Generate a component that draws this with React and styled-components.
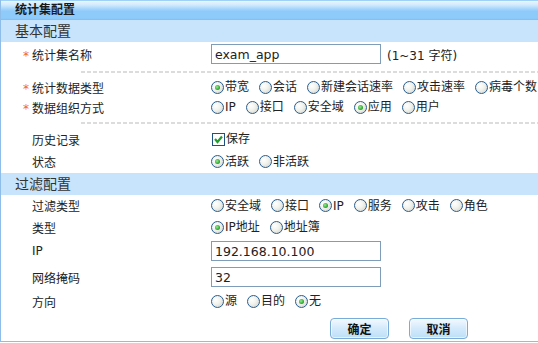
import React from "react";
import styled, { createGlobalStyle } from "styled-components";

const GlobalStyle = createGlobalStyle`
  html, body {
    margin: 0;
    padding: 0;
    background: #fff;
    overflow: hidden;
  }
  body {
    font-family: "DejaVu Sans", "Noto Sans CJK SC", sans-serif;
    font-size: 12px;
    color: #222;
  }
`;

const dataTypes = ["带宽", "会话", "新建会话速率", "攻击速率", "病毒个数"];
const orgModes = ["IP", "接口", "安全域", "应用", "用户"];
const filterTypes = ["安全域", "接口", "IP", "服务", "攻击", "角色"];

export default function App() {
  return (
    <>
      <GlobalStyle />
      <Panel>
        <TitleBar>统计集配置</TitleBar>

        <SectionHead>基本配置</SectionHead>
        <Row $h={24}>
          <Label>
            <Req>*</Req>统计集名称
          </Label>
          <TextInput defaultValue="exam_app" />
          <Hint>(1~31 字符)</Hint>
        </Row>
        <Separator />
        <Row $h={20}>
          <Label>
            <Req>*</Req>统计数据类型
          </Label>
          <RadioGroup items={dataTypes} checked="带宽" />
        </Row>
        <Row $h={20}>
          <Label>
            <Req>*</Req>数据组织方式
          </Label>
          <RadioGroup items={orgModes} checked="应用" />
        </Row>
        <Separator />
        <Row $h={22}>
          <Label>历史记录</Label>
          <Option>
            <CheckBox>
              <svg width="11" height="11" viewBox="0 0 11 11">
                <polyline
                  points="2,5 4.5,8 9,2.5"
                  fill="none"
                  stroke="#1f9e2a"
                  strokeWidth="2.2"
                />
              </svg>
            </CheckBox>
            保存
          </Option>
        </Row>
        <Row $h={23}>
          <Label>状态</Label>
          <RadioGroup items={["活跃", "非活跃"]} checked="活跃" />
        </Row>

        <SectionHead>过滤配置</SectionHead>
        <Row $h={21}>
          <Label>过滤类型</Label>
          <RadioGroup items={filterTypes} checked="IP" />
        </Row>
        <Row $h={22}>
          <Label>类型</Label>
          <RadioGroup items={["IP地址", "地址簿"]} checked="IP地址" />
        </Row>
        <Row $h={26}>
          <Label>IP</Label>
          <TextInput defaultValue="192.168.10.100" />
        </Row>
        <Row $h={26}>
          <Label>网络掩码</Label>
          <TextInput defaultValue="32" />
        </Row>
        <Row $h={22}>
          <Label>方向</Label>
          <RadioGroup items={["源", "目的", "无"]} checked="无" />
        </Row>

        <Buttons>
          <Button>确定</Button>
          <Button>取消</Button>
        </Buttons>
      </Panel>
    </>
  );
}

function RadioGroup({ items, checked }) {
  return (
    <Options>
      {items.map((item) => (
        <Option key={item}>
          <Radio $on={item === checked} />
          {item}
        </Option>
      ))}
    </Options>
  );
}

const Panel = styled.div`
  border-left: 1px solid #8fbde9;
  border-bottom: 1px solid #8fbde9;
  overflow: hidden;
`;

const TitleBar = styled.div`
  height: 19px;
  border-top: 1px solid #9fd0f6;
  background: linear-gradient(
    #eaf6fe 0%,
    #d2ebfd 20%,
    #9dd2fb 45%,
    #8ecbfb 55%,
    #8ecbfb 90%,
    #7cbff2 100%
  );
  padding-left: 14px;
  font-weight: bold;
  font-size: 12px;
  line-height: 19px;
  color: #1a1a1a;
`;

const SectionHead = styled.div`
  height: 22px;
  background: #c7e4fc;
  padding-left: 14px;
  font-size: 14px;
  line-height: 22px;
  color: #333;
`;

const Row = styled.div`
  display: flex;
  align-items: center;
  height: ${(p) => p.$h}px;
  white-space: nowrap;
  overflow: hidden;
`;

const Label = styled.div`
  flex: none;
  width: 210px;
  box-sizing: border-box;
  padding-left: 31px;
  color: #222;
`;

const Req = styled.span`
  display: inline-block;
  width: 9px;
  margin-left: -9px;
  color: #f26a10;
`;

const TextInput = styled.input`
  flex: none;
  width: 170px;
  height: 20px;
  box-sizing: border-box;
  border: 1px solid #7f9db9;
  padding: 0 3px;
  margin: 0;
  font-family: "DejaVu Sans", sans-serif;
  font-size: 12.5px;
  color: #222;
  outline: none;
`;

const Hint = styled.span`
  margin-left: 6px;
  color: #222;
`;

const Separator = styled.div`
  height: 11px;
  display: flex;
  align-items: center;
  padding-left: 80px;

  &::before {
    content: "";
    flex: 1;
    height: 2px;
    background: repeating-linear-gradient(
      90deg,
      #dcdcdc 0 4px,
      transparent 4px 6px
    );
  }
`;

const Options = styled.div`
  display: flex;
  align-items: center;
  flex: none;
`;

const Option = styled.label`
  display: inline-flex;
  align-items: center;
  flex: none;
  margin-right: 10px;
  line-height: 14px;
`;

const Radio = styled.span`
  flex: none;
  width: 13px;
  height: 13px;
  box-sizing: border-box;
  border-radius: 50%;
  border: 1px solid #2a5d8e;
  background: radial-gradient(
    circle at 35% 35%,
    #ffffff 0%,
    #f1f1ec 45%,
    #cfcfc6 100%
  );
  display: inline-flex;
  align-items: center;
  justify-content: center;
  margin-right: 1px;

  &::after {
    content: "";
    width: 5px;
    height: 5px;
    border-radius: 50%;
    background: radial-gradient(circle at 40% 40%, #9ae89a, #21a121 70%);
    display: ${(p) => (p.$on ? "block" : "none")};
  }
`;

const CheckBox = styled.span`
  flex: none;
  width: 13px;
  height: 13px;
  box-sizing: border-box;
  border: 1px solid #1c5180;
  background: #fff;
  display: inline-flex;
  align-items: center;
  justify-content: center;
  margin-left: 1px;
  margin-right: 1px;
`;

const Buttons = styled.div`
  display: flex;
  gap: 20px;
  height: 29px;
  padding: 6px 0 0 329px;
  box-sizing: border-box;
`;

const Button = styled.button`
  width: 59px;
  height: 21px;
  padding: 0;
  border: 1px solid #79acd9;
  border-radius: 4px;
  background: linear-gradient(#f3f9fe 0%, #d6ebfb 45%, #bddff8 100%);
  box-shadow: inset 0 0 0 1px rgba(255, 255, 255, 0.6);
  font-family: "Noto Sans CJK SC", sans-serif;
  font-size: 12px;
  font-weight: bold;
  color: #111;
`;
